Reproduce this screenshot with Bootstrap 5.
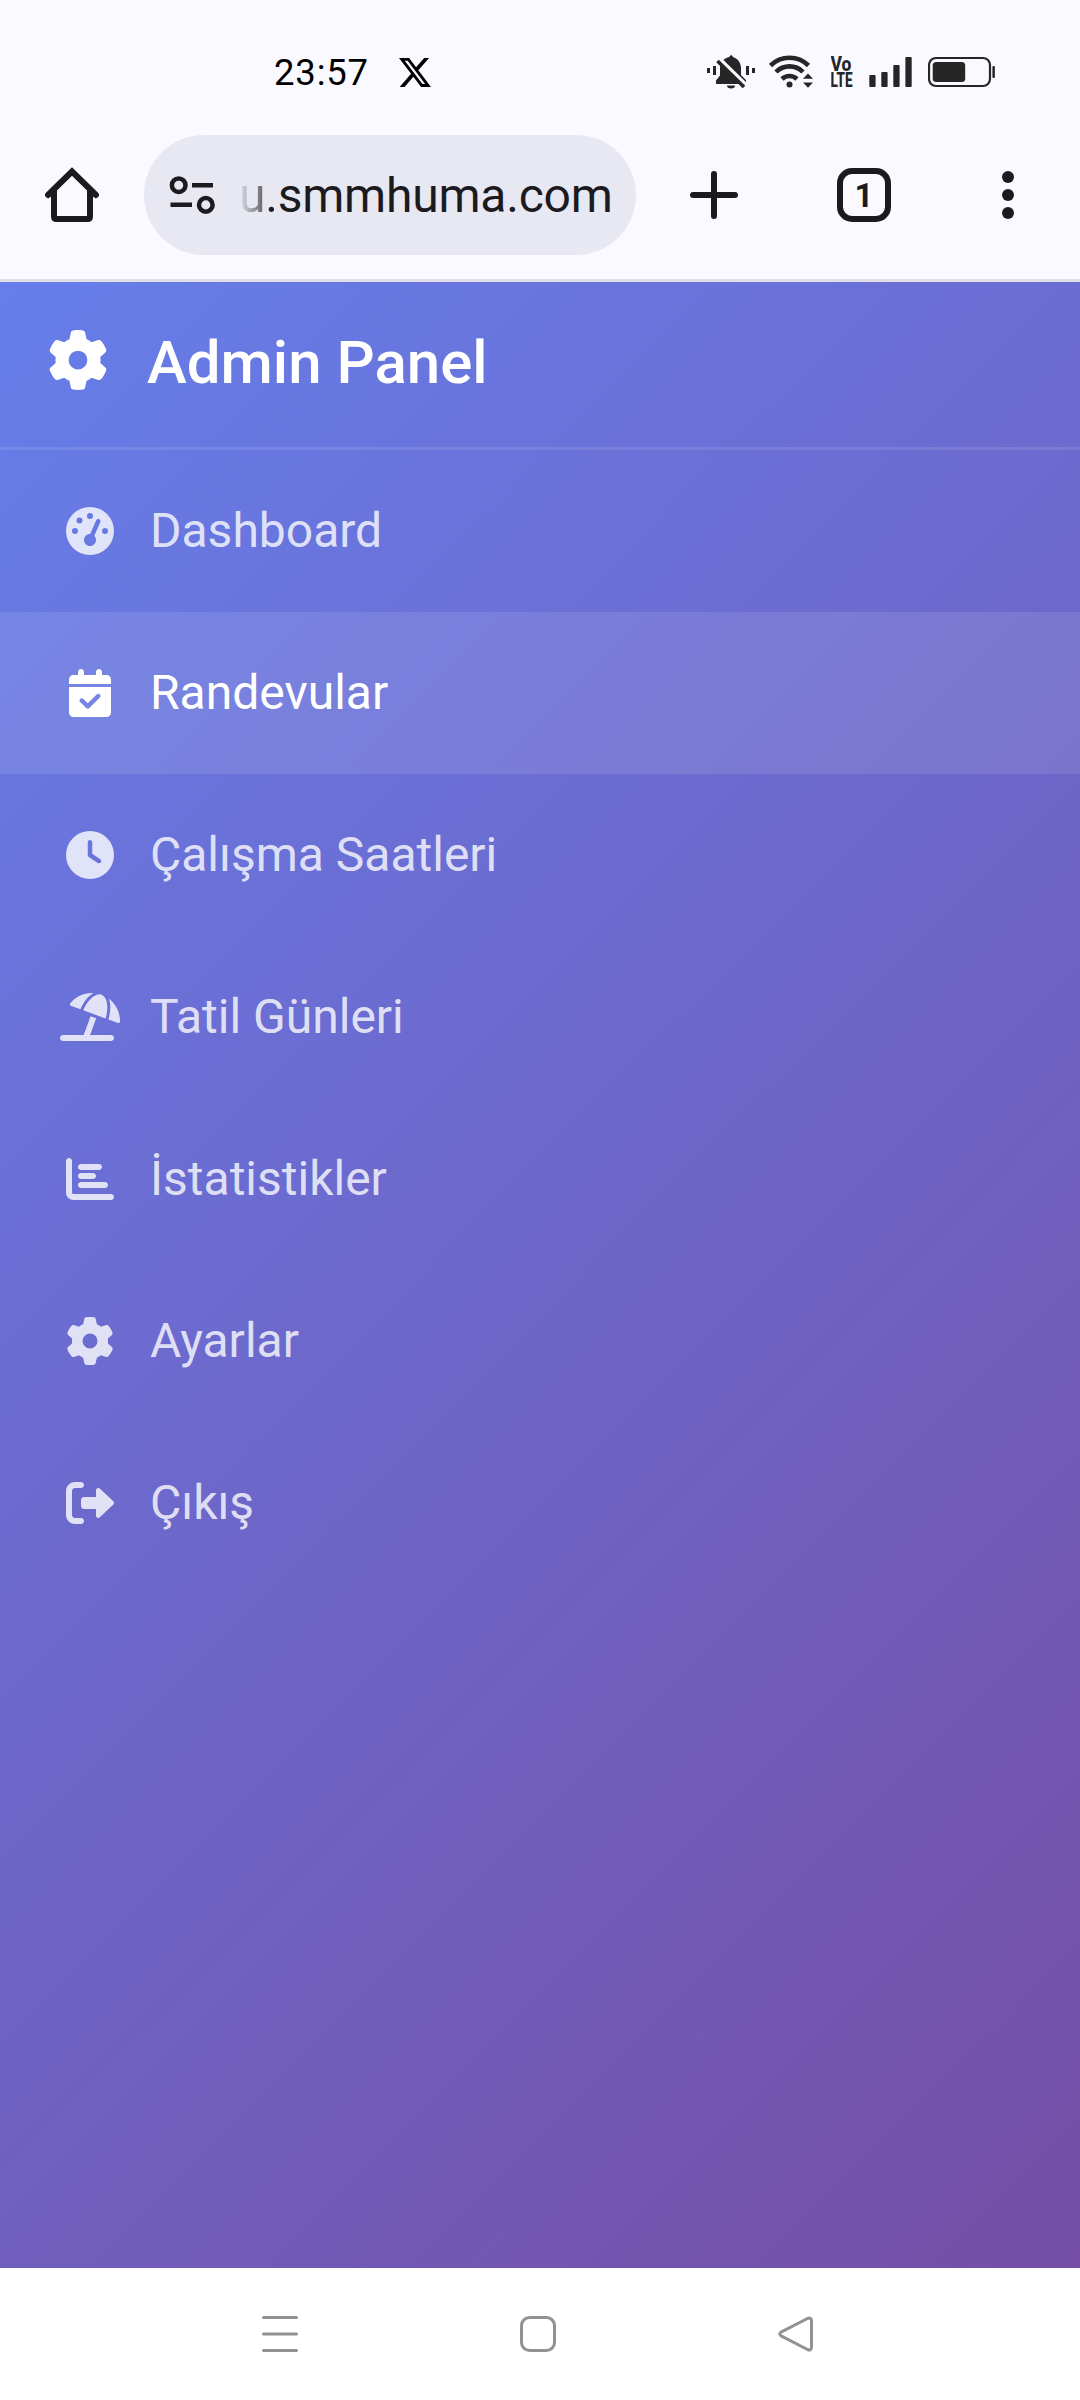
<!DOCTYPE html>
<html lang="tr">
<head>
<meta charset="utf-8">
<meta name="viewport" content="width=device-width, initial-scale=1">
<title>Admin Panel</title>
<link href="https://cdn.jsdelivr.net/npm/bootstrap@5.3.0/dist/css/bootstrap.min.css" rel="stylesheet">
<style>
  body { font-family: Roboto, "Noto Sans", sans-serif; background: #fff; }
  svg { display: block; flex: none; }
  .phone { width: 1080px; height: 2400px; overflow: hidden; }
  .chrome-top { background: #faf9ff; color: #1b1b1f; }
  .status-bar { height: 120px; padding: 48px 84px 0 274px; color: #000; }
  .status-time { font-size: 36.5px; line-height: 50px; letter-spacing: .8px; width: 125px; }
  .x-logo { margin-top: 10px; }
  .status-icons { color: #262626; }
  .toolbar-row { height: 159px; padding: 15px 66px 9px 45px; }
  .url-pill { width: 492px; height: 120px; margin-left: 45px; padding: 2px 24px 0 25px; background: #e8e8f2; border-radius: 60px; }
  .url-text { font-size: 48px; line-height: 60px; letter-spacing: -.22px; color: #1b1b1f; }
  .url-fade { background: linear-gradient(90deg, #e0e0e9 0, #5e5e64 26px, #1b1b1f 32px); -webkit-background-clip: text; background-clip: text; color: transparent; }
  .toolbar-line { height: 3px; background: #e0dfe8; }
  .toolbar-actions { height: 120px; margin-left: 54px; }
  .tab-count { width: 54px; height: 54px; margin-left: 99px; border: 6px solid #1b1b1f; border-radius: 15px; font-size: 33px; line-height: 43px; }
  .sidebar { background: linear-gradient(135deg, #667eea 0%, #764ba2 100%) 0 0 / 100% 2148px no-repeat; }
  .sidebar-head { height: 168px; padding: 48px 48px 0; border-bottom: 3px solid rgba(255,255,255,.1); }
  .sidebar-head h1 { font-size: 60px; line-height: 66px; font-weight: 500; margin-left: 39px; }
  .side-nav .nav-link { height: 162px; padding: 0 60px; color: rgba(255,255,255,.8); font-size: 48px; line-height: 72px; }
  .side-nav .nav-link.active { color: #fff; background: rgba(255,255,255,.1); }
  .icon-slot { width: 60px; margin-right: 30px; }
  .icon-slot svg { height: 48px; fill: currentColor; }
  .system-nav { height: 132px; padding: 0 266px 0 262px; }
</style>
</head>
<body>
<svg class="d-none">
  <symbol id="gear" viewBox="0 0 512 512"><path d="M495.9 166.6c3.2 8.7 .5 18.4-6.4 24.6l-43.3 39.4c1.1 8.3 1.7 16.8 1.7 25.4s-.6 17.1-1.7 25.4l43.3 39.4c6.9 6.2 9.6 15.9 6.4 24.6c-4.4 11.9-9.7 23.3-15.8 34.3l-4.7 8.1c-6.6 11-14 21.4-22.1 31.2c-5.9 7.2-15.7 9.6-24.5 6.8l-55.7-17.7c-13.4 10.3-28.2 18.9-44 25.4l-12.5 57.1c-2 9.1-9 16.3-18.2 17.8c-13.8 2.3-28 3.5-42.5 3.5s-28.7-1.2-42.5-3.5c-9.2-1.5-16.2-8.7-18.2-17.8l-12.5-57.1c-15.8-6.5-30.6-15.1-44-25.4L83.1 425.9c-8.8 2.8-18.6 .3-24.5-6.8c-8.1-9.8-15.5-20.2-22.1-31.2l-4.7-8.1c-6.1-11-11.4-22.4-15.8-34.3c-3.2-8.7-.5-18.4 6.4-24.6l43.3-39.4C64.6 273.1 64 264.6 64 256s.6-17.1 1.7-25.4L22.4 191.2c-6.9-6.2-9.6-15.9-6.4-24.6c4.4-11.9 9.7-23.3 15.8-34.3l4.7-8.1c6.6-11 14-21.4 22.1-31.2c5.9-7.2 15.7-9.6 24.5-6.8l55.7 17.7c13.4-10.3 28.2-18.9 44-25.4l12.5-57.1c2-9.1 9-16.3 18.2-17.8C227.3 1.2 241.5 0 256 0s28.7 1.2 42.5 3.5c9.2 1.5 16.2 8.7 18.2 17.8l12.5 57.1c15.8 6.5 30.6 15.1 44 25.4l55.7-17.7c8.8-2.8 18.6-.3 24.5 6.8c8.1 9.8 15.5 20.2 22.1 31.2l4.7 8.1c6.1 11 11.4 22.4 15.8 34.3zM256 336a80 80 0 1 0 0-160 80 80 0 1 0 0 160z"/></symbol>
</svg>
<div class="phone d-flex flex-column">
  <header class="chrome-top">
    <div class="status-bar d-flex align-items-start">
      <span class="status-time">23:57</span>
      <svg class="x-logo" width="32" height="29" viewBox="1.254 2.25 21.6 19.5"><path d="M18.244 2.25h3.308l-7.227 8.26 8.502 11.24H16.17l-5.214-6.817L4.99 21.75H1.68l7.73-8.835L1.254 2.25H8.08l4.713 6.231zm-1.161 17.52h1.833L7.084 4.126H5.117z"/></svg>
      <div class="status-icons d-flex ms-auto pt-1">
        <!-- muted bell -->
        <svg width="63" height="40" viewBox="706 52 63 40" fill="currentColor">
          <path d="M731 55a2.500 2.500 0 0 1 2 2C738 58.500 741 63 741 68v7l5 5v4H716v-3.500l4-5V68c0-5 3-9.500 9-11z"/>
          <path d="M727 85.500h8a4 3 0 0 1-8 0z"/>
          <path d="M719 58.500L747.500 86.500" stroke="#faf9ff" stroke-width="4"/>
          <path d="M717.500 61L744 87" stroke="currentColor" stroke-width="3.600"/>
          <path d="M707 68h3v5h-3zM713 66h3v9h-3zM746 66h3v9h-3zM752 68h3v5h-3z"/>
        </svg>
        <!-- wifi -->
        <svg width="62" height="40" viewBox="769 52 62 40" fill="none" stroke="currentColor" stroke-width="4.600">
          <path d="M770.500 65.500a27 27 0 0 1 38 0M776 72a19 19 0 0 1 27 0M782 79a11 11 0 0 1 15 0"/>
          <circle cx="789.500" cy="84.500" r="3" fill="currentColor" stroke="none"/>
          <path d="M803 78.800l5-5.300 5 5.300zM803 82.500l5 5.300 5-5.300z" fill="currentColor" stroke="none"/>
        </svg>
        <svg width="38" height="40" viewBox="831 52 38 40" fill="currentColor" font-family="Roboto, sans-serif" font-weight="800">
          <text font-size="19.500"><tspan x="830.500" y="70.700" textLength="21" lengthAdjust="spacingAndGlyphs">Vo</tspan><tspan x="830.500" y="86.700" textLength="22" lengthAdjust="spacingAndGlyphs">LTE</tspan></text>
        </svg>
        <svg width="59" height="40" viewBox="869 52 59 40" fill="currentColor">
          <rect x="869.300" y="75" width="6.300" height="12" rx="1"/><rect x="881.300" y="72" width="6.300" height="15" rx="1"/><rect x="893.300" y="65" width="6.300" height="22" rx="1"/><rect x="905.400" y="57" width="6.300" height="30" rx="1"/>
        </svg>
        <svg width="68" height="40" viewBox="928 52 68 40" fill="currentColor">
          <rect x="929" y="58" width="61" height="28" rx="7" fill="none" stroke="currentColor" stroke-width="2.200"/><rect x="932.700" y="62" width="32.500" height="20" rx="3.500"/><rect x="992.400" y="66" width="2.500" height="12" rx="1"/>
        </svg>
      </div>
    </div>
    <div class="toolbar-row d-flex align-items-start">
      <svg width="54" height="120" viewBox="45 135 54 120" fill="none" stroke="currentColor" stroke-width="6" stroke-linecap="round"><path d="M48 195L72 171.500 96 195"/><path d="M54 190v26.500q0 2.500 2.500 2.500h31q2.500 0 2.500-2.500V190" stroke-linecap="butt"/></svg>
      <div class="url-pill d-flex align-items-center">
        <svg width="46" height="42" viewBox="169 175 46 42" fill="none" stroke="currentColor" stroke-width="4.500"><circle cx="178.700" cy="185.200" r="6.800"/><circle cx="205.800" cy="204.900" r="6.800"/><path d="M192 185.200h21M170.500 204.700h21.500"/></svg>
        <span class="url-text text-nowrap ms-4"><span class="url-fade">u.</span>smmhuma.com</span>
      </div>
      <div class="toolbar-actions d-flex align-items-center flex-grow-1">
        <svg width="48" height="120" viewBox="0 0 48 120" stroke="currentColor" stroke-width="6" stroke-linecap="round"><path d="M3 60h42M24 39v42"/></svg>
        <span class="tab-count fw-bold text-center">1</span>
        <svg class="ms-auto" width="12" height="54" viewBox="0 0 12 54" fill="currentColor"><circle cx="6" cy="9" r="6"/><circle cx="6" cy="27" r="6"/><circle cx="6" cy="45" r="6"/></svg>
      </div>
    </div>
    <div class="toolbar-line"></div>
  </header>

  <main class="sidebar flex-grow-1">
    <div class="sidebar-head text-white">
      <div class="d-flex align-items-start">
        <svg width="60" height="60" fill="currentColor"><use href="#gear"/></svg>
        <h1 class="mb-0">Admin Panel</h1>
      </div>
    </div>
    <nav class="side-nav nav flex-column">
      <a class="nav-link d-flex align-items-center" href="#"><span class="icon-slot d-flex justify-content-center"><svg viewBox="0 0 512 512"><path d="M0 256a256 256 0 1 1 512 0A256 256 0 1 1 0 256zM288 96a32 32 0 1 0 -64 0 32 32 0 1 0 64 0zM256 416c35.300 0 64-28.700 64-64c0-17.400-6.900-33.100-18.100-44.600L366 161.700c5.300-12.100-.2-26.300-12.300-31.600s-26.300 .2-31.600 12.300L257.900 288c-.6 0-1.300 0-1.900 0c-35.300 0-64 28.700-64 64s28.700 64 64 64zM176 144a32 32 0 1 0 -64 0 32 32 0 1 0 64 0zM96 288a32 32 0 1 0 0-64 32 32 0 1 0 0 64zm352-32a32 32 0 1 0 -64 0 32 32 0 1 0 64 0z"/></svg></span>Dashboard</a>
      <a class="nav-link active d-flex align-items-center" href="#"><span class="icon-slot d-flex justify-content-center"><svg viewBox="0 0 448 512"><path d="M128 0c17.700 0 32 14.300 32 32V64H288V32c0-17.700 14.300-32 32-32s32 14.300 32 32V64h48c26.500 0 48 21.500 48 48v48H0V112C0 85.500 21.500 64 48 64H96V32c0-17.700 14.300-32 32-32zM0 192H448V464c0 26.500-21.500 48-48 48H48c-26.500 0-48-21.500-48-48V192zM329 305c9.400-9.400 9.400-24.600 0-33.900s-24.600-9.400-33.900 0l-95 95-47-47c-9.400-9.400-24.600-9.400-33.900 0s-9.400 24.600 0 33.900l64 64c9.400 9.400 24.600 9.400 33.900 0L329 305z"/></svg></span>Randevular</a>
      <a class="nav-link d-flex align-items-center" href="#"><span class="icon-slot d-flex justify-content-center"><svg viewBox="0 0 512 512"><path d="M256 0a256 256 0 1 1 0 512A256 256 0 1 1 256 0zM232 120V256c0 8 4 15.500 10.700 20l96 64c11 7.400 25.900 4.400 33.300-6.700s4.400-25.900-6.700-33.300L280 243.200V120c0-13.300-10.700-24-24-24s-24 10.700-24 24z"/></svg></span>Çalışma Saatleri</a>
      <a class="nav-link d-flex align-items-center" href="#"><span class="icon-slot d-flex justify-content-center"><svg viewBox="0 0 640 512"><path d="M115.380 136.900l102.110 37.180c35.190-81.540 86.210-144.290 139-173.700-95.880-4.890-188.780 36.960-248.530 111.800-6.690 8.400-2.660 21.050 7.420 24.720zm132.250 48.160l238.480 86.830c35.760-121.380 18.700-231.660-42.630-253.980-7.400-2.700-15.130-4-23.090-4-58.020.010-128.270 69.170-172.760 171.150zM521.480 60.500c6.220 16.300 10.830 34.600 13.200 55.190 5.740 49.890-1.420 108.230-18.950 166.980l102.620 37.360c10.090 3.670 21.310-3.430 21.570-14.170 2.320-95.690-41.910-187.440-118.440-245.360zM544 448H321.060L386 269.500l-60.140-21.900-72.900 200.400H32c-17.700 0-32 14.300-32 32s14.300 32 32 32h512c17.700 0 32-14.300 32-32s-14.300-32-32-32z"/></svg></span>Tatil Günleri</a>
      <a class="nav-link d-flex align-items-center" href="#"><span class="icon-slot d-flex justify-content-center"><svg viewBox="0 0 512 512"><path d="M32 32c17.700 0 32 14.300 32 32V400c0 8.800 7.200 16 16 16H480c17.700 0 32 14.300 32 32s-14.300 32-32 32H80c-44.200 0-80-35.800-80-80V64C0 46.300 14.300 32 32 32zm96 96c0-17.700 14.300-32 32-32l192 0c17.700 0 32 14.300 32 32s-14.300 32-32 32H160c-17.700 0-32-14.300-32-32zm32 64H288c17.700 0 32 14.300 32 32s-14.300 32-32 32H160c-17.700 0-32-14.300-32-32s14.300-32 32-32zm0 96H416c17.700 0 32 14.300 32 32s-14.300 32-32 32H160c-17.700 0-32-14.300-32-32s14.300-32 32-32z"/></svg></span>İstatistikler</a>
      <a class="nav-link d-flex align-items-center" href="#"><span class="icon-slot d-flex justify-content-center"><svg width="48"><use href="#gear"/></svg></span>Ayarlar</a>
      <a class="nav-link d-flex align-items-center" href="#"><span class="icon-slot d-flex justify-content-center"><svg viewBox="0 0 512 512"><path d="M96 480h64C177.700 480 192 465.700 192 448S177.700 416 160 416H96c-17.670 0-32-14.330-32-32V128c0-17.670 14.330-32 32-32h64C177.700 96 192 81.670 192 64S177.700 32 160 32H96C42.980 32 0 74.980 0 128v256C0 437 42.980 480 96 480zM504.800 238.500l-144.100-136c-6.975-6.578-17.200-8.375-26-4.594c-8.803 3.797-14.510 12.470-14.510 22.050l-.0918 72l-128-.001c-17.690 0-32.020 14.330-32.020 32v64c0 17.670 14.340 32 32.020 32l128 .001l.0918 71.100c0 9.578 5.707 18.250 14.510 22.050c8.803 3.781 19.030 1.984 26-4.594l144.100-136C514.400 264.400 514.400 247.600 504.800 238.500z"/></svg></span>Çıkış</a>
    </nav>
  </main>

  <footer class="system-nav bg-white d-flex align-items-center justify-content-between">
    <svg width="36" height="36" fill="none" stroke="#929292" stroke-width="3" stroke-linecap="round"><path d="M1.500 1.500h33M1.500 18h33M1.500 34.500h33"/></svg>
    <svg width="36" height="36" fill="none" stroke="#929292" stroke-width="3"><rect x="1.500" y="1.500" width="33" height="33" rx="8"/></svg>
    <svg width="36" height="36" fill="none" stroke="#929292" stroke-width="3"><path d="M29.500 2.500L3.500 15.800q-3.500 2.200 0 4.400L29.500 33.500q4 1.500 4-2.500V5q0-4-4-2.500z"/></svg>
  </footer>
</div>
<script src="https://cdn.jsdelivr.net/npm/bootstrap@5.3.0/dist/js/bootstrap.bundle.min.js"></script>
</body>
</html>
